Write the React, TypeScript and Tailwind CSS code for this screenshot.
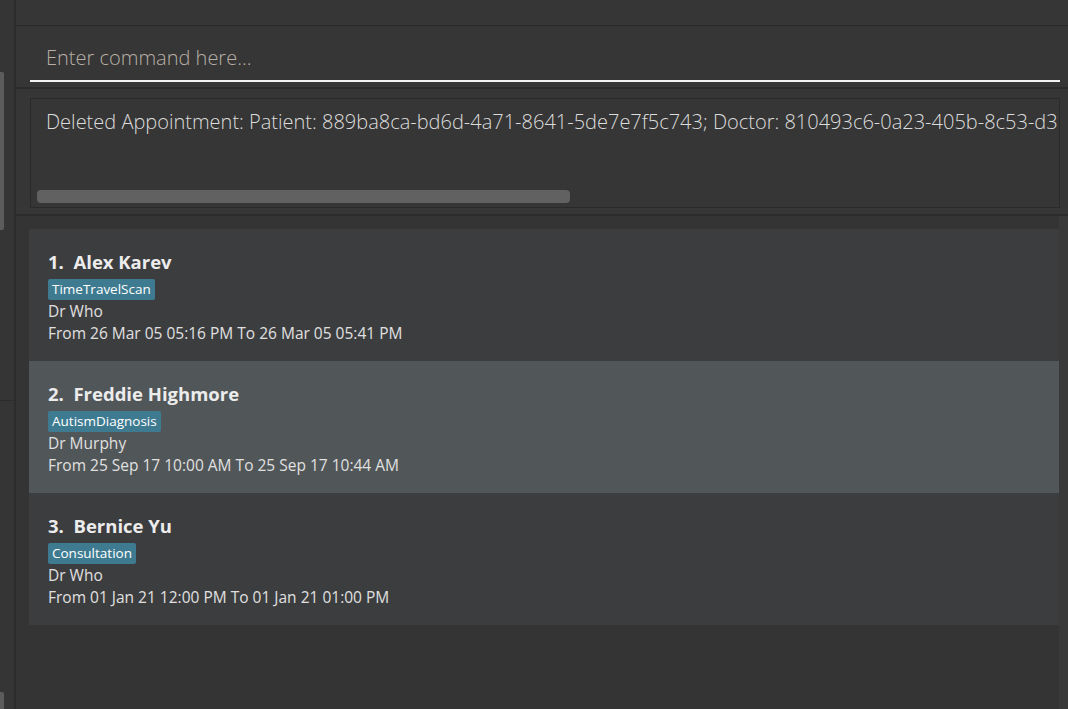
import React from "react";

type Appointment = {
  id: number;
  patient: string;
  tag: string;
  doctor: string;
  from: string;
  to: string;
};

const appointments: Appointment[] = [
  { id: 1, patient: "Alex Karev", tag: "TimeTravelScan", doctor: "Dr Who", from: "26 Mar 05 05:16 PM", to: "26 Mar 05 05:41 PM" },
  { id: 2, patient: "Freddie Highmore", tag: "AutismDiagnosis", doctor: "Dr Murphy", from: "25 Sep 17 10:00 AM", to: "25 Sep 17 10:44 AM" },
  { id: 3, patient: "Bernice Yu", tag: "Consultation", doctor: "Dr Who", from: "01 Jan 21 12:00 PM", to: "01 Jan 21 01:00 PM" },
];

const font = { fontFamily: '"Open Sans", "Noto Sans", sans-serif' };

function AppointmentCard({ a, selected }: { a: Appointment; selected: boolean }) {
  return (
    <div className={`h-[132px] px-[19px] pt-[20px] ${selected ? "bg-[#515658]" : "bg-[#3c3d3f]"}`}>
      <div className="h-[26px] whitespace-pre text-[18.5px] font-bold leading-[26px] text-[#ececec]">
        {a.id}.  {a.patient}
      </div>
      <div className="mt-[4px] flex">
        <span className="h-[21px] rounded-[2px] bg-[#3e7b91] px-[4px] text-[13.5px] leading-[21px] text-white">
          {a.tag}
        </span>
      </div>
      <div className="text-[15.5px] leading-[22px] text-[#e0e0e0]">{a.doctor}</div>
      <div className="text-[15.5px] leading-[22px] text-[#e0e0e0]">
        From {a.from} To {a.to}
      </div>
    </div>
  );
}

export default function App() {
  return (
    <div className="flex h-[709px] w-[1068px] overflow-hidden bg-[#353535]" style={font}>
      {/* left collapsed panel */}
      <div className="flex w-[16px] shrink-0 flex-col border-r-2 border-[#2c2c2c] bg-[#353535]">
        <div className="h-[25px]" />
        <div className="mt-[47px] h-[158px] w-[4px] rounded-r-[2px] bg-[#5c5c5c]" />
        <div className="mt-[170px] h-px w-[14px] bg-[#2c2c2c]" />
        <div className="flex-1" />
        <div className="h-[17px] w-[4px] rounded-tr-[2px] bg-[#5c5c5c]" />
      </div>

      <div className="flex min-w-0 flex-1 flex-col">
        <div className="h-[26px] shrink-0 border-b border-[#2b2b2b] bg-[#363636]" />

        {/* command box */}
        <div className="h-[63px] shrink-0 border-b-2 border-[#2b2b2b] bg-[#363636] pl-[14px] pr-[8px] pt-[18px]">
          <div className="flex h-[38px] items-center border-b-2 border-[#f2f2f2] pb-[8px] pl-[16px] text-[20px] font-light text-[#b8b0a6]">
            Enter command here...
          </div>
        </div>

        {/* result display */}
        <div className="h-[127px] shrink-0 border-b-2 border-[#2b2b2b] bg-[#363636] pb-[6px] pl-[14px] pr-[8px] pt-[9px]">
          <div className="flex h-full flex-col overflow-hidden border border-[#2a2a2a] bg-[#363636]">
            <div className="overflow-hidden whitespace-nowrap pl-[15px] pt-[8px] text-[20px] font-light text-[#dcdcdc]">
              Deleted Appointment: Patient: 889ba8ca-bd6d-4a71-8641-5de7e7f5c743; Doctor: 810493c6-0a23-405b-8c53-d3
            </div>
            <div className="flex-1" />
            <div className="mb-[4px] ml-[6px] h-[13px] w-[533px] shrink-0 rounded-[4px] bg-[#616161]" />
          </div>
        </div>

        {/* appointment list */}
        <div className="flex flex-1 bg-[#343434]">
          <div className="min-w-0 flex-1 pl-[13px] pt-[13px]">
            {appointments.map((a) => (
              <AppointmentCard key={a.id} a={a} selected={a.id === 2} />
            ))}
          </div>
          <div className="w-[9px] shrink-0 bg-[#393939]" />
        </div>
      </div>
    </div>
  );
}
